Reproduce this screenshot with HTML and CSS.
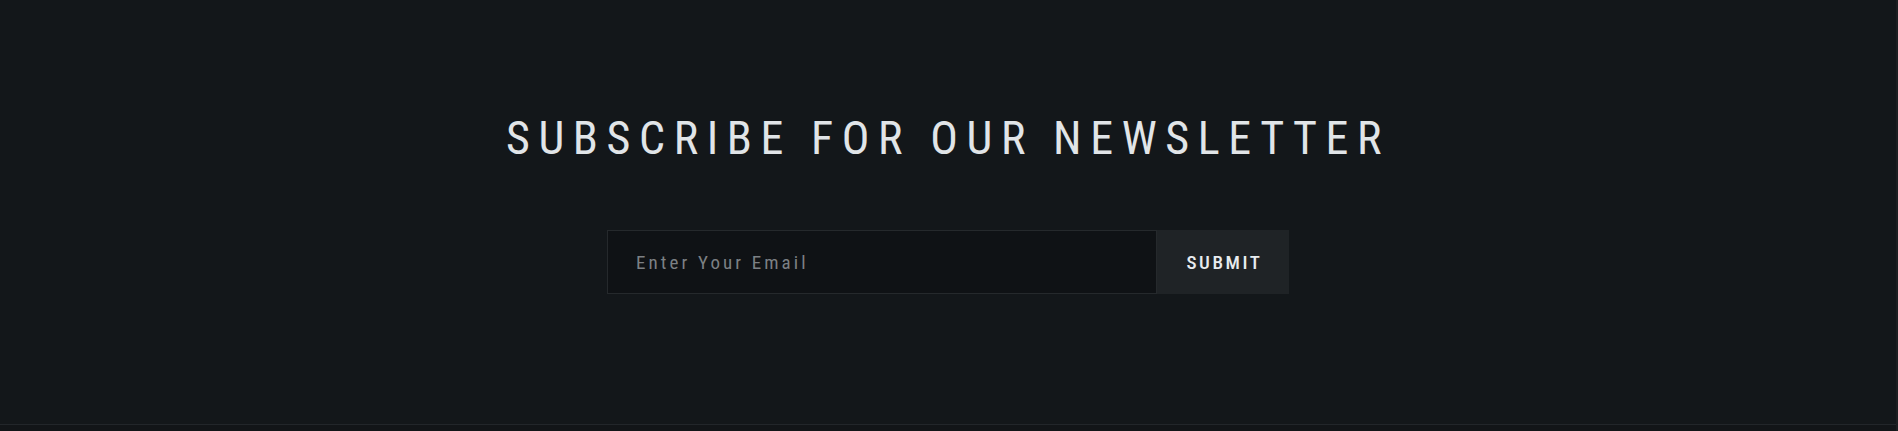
FILE: index.html
```html
<!DOCTYPE html>
<html>
<head>
<meta charset="utf-8">
<link rel="stylesheet" href="styles.css">
</head>
<body>
<section class="newsletter">
  <h2 class="title">SUBSCRIBE FOR OUR NEWSLETTER</h2>
  <form class="form">
    <input class="email" type="text" placeholder="Enter Your Email">
    <button class="submit" type="button">SUBMIT</button>
  </form>
</section>
</body>
</html>
```

FILE: styles.css
```css
html, body {
  margin: 0;
  padding: 0;
  background: #121518;
}
body {
  font-family: "Roboto Condensed", Roboto, sans-serif;
  border-right: 2px solid #1c1f22;
  min-height: 431px;
  box-sizing: border-box;
}
.newsletter {
  height: 425px;
  box-sizing: border-box;
  border-bottom: 1px solid #22262a;
  background: #13171a;
  display: flex;
  flex-direction: column;
  align-items: center;
  padding-top: 113px;
}
.title {
  margin: 0;
  font-weight: 400;
  font-size: 46px;
  line-height: 50px;
  letter-spacing: 8.6px;
  color: #e1e5e8;
}
.form {
  margin-top: 67px;
  display: flex;
  height: 64px;
}
.email {
  width: 550px;
  height: 64px;
  box-sizing: border-box;
  background: #0f1215;
  border: 1px solid #25292c;
  padding: 0 28px;
  font-family: inherit;
  font-size: 19px;
  letter-spacing: 3.1px;
  color: #7c8084;
  outline: none;
}
.email::placeholder {
  color: #7c8084;
}
.submit {
  width: 132px;
  height: 64px;
  border: none;
  background: #1f2326;
  color: #e8ecef;
  font-family: inherit;
  font-size: 19px;
  font-weight: 500;
  letter-spacing: 2.6px;
  padding: 0 0 0 3px;
  cursor: pointer;
}
```
